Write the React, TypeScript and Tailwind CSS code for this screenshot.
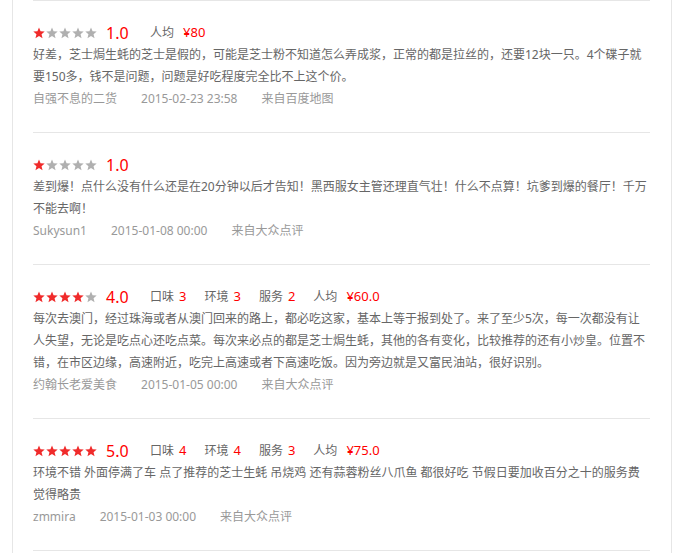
import React from "react";

type Review = {
  score: number;
  taste?: number;
  env?: number;
  service?: number;
  price?: string;
  lines: string;
  user: string;
  date: string;
  source: string;
};

const reviews: Review[] = [
  {
    score: 1,
    price: "¥80",
    lines:
      "好差，芝士焗生蚝的芝士是假的，可能是芝士粉不知道怎么弄成浆，正常的都是拉丝的，还要12块一只。4个碟子就要150多，钱不是问题，问题是好吃程度完全比不上这个价。",
    user: "自强不息的二货",
    date: "2015-02-23 23:58",
    source: "来自百度地图",
  },
  {
    score: 1,
    lines:
      "差到爆！点什么没有什么还是在20分钟以后才告知！黑西服女主管还理直气壮！什么不点算！坑爹到爆的餐厅！千万不能去啊！",
    user: "Sukysun1",
    date: "2015-01-08 00:00",
    source: "来自大众点评",
  },
  {
    score: 4,
    taste: 3,
    env: 3,
    service: 2,
    price: "¥60.0",
    lines:
      "每次去澳门，经过珠海或者从澳门回来的路上，都必吃这家，基本上等于报到处了。来了至少5次，每一次都没有让人失望，无论是吃点心还吃点菜。每次来必点的都是芝士焗生蚝，其他的各有变化，比较推荐的还有小炒皇。位置不错，在市区边缘，高速附近，吃完上高速或者下高速吃饭。因为旁边就是又富民油站，很好识别。",
    user: "约翰长老爱美食",
    date: "2015-01-05 00:00",
    source: "来自大众点评",
  },
  {
    score: 5,
    taste: 4,
    env: 4,
    service: 3,
    price: "¥75.0",
    lines:
      "环境不错 外面停满了车 点了推荐的芝士生蚝 吊烧鸡 还有蒜蓉粉丝八爪鱼 都很好吃 节假日要加收百分之十的服务费 觉得略贵",
    user: "zmmira",
    date: "2015-01-03 00:00",
    source: "来自大众点评",
  },
];

function Star({ on }: { on: boolean }) {
  return (
    <svg width="12" height="12" viewBox="0 0 12 12" className="block">
      <polygon
        points="6,0.4 7.55,4.2 11.7,4.5 8.55,7.15 9.55,11.3 6,9.05 2.45,11.3 3.45,7.15 0.3,4.5 4.45,4.2"
        fill={on ? "#f02b2b" : "#b0b0b0"}
      />
    </svg>
  );
}

function Label({ name, value, wide }: { name: string; value: string | number; wide?: boolean }) {
  return (
    <span className="flex items-center mr-[18px]">
      <span className="text-[#666] text-[12px]">{name}</span>
      <span className={`text-[#f00] text-[13px] ${wide ? "ml-[9px]" : "ml-[5px]"}`}>{value}</span>
    </span>
  );
}

function Item({ r }: { r: Review }) {
  return (
    <div className="border-t border-[#e6e6e6] pt-[21px] pb-[22px]">
      <div className="flex items-center h-[22px]">
        <div className="flex gap-[1px]">
          {[1, 2, 3, 4, 5].map((i) => (
            <Star key={i} on={i <= r.score} />
          ))}
        </div>
        <span className="ml-[9px] text-[16px] leading-[22px] text-[#f00] w-[22px]">
          {r.score.toFixed(1)}
        </span>
        <div className="flex items-center ml-[22px]">
          {r.taste !== undefined && <Label name="口味" value={r.taste} />}
          {r.env !== undefined && <Label name="环境" value={r.env} />}
          {r.service !== undefined && <Label name="服务" value={r.service} />}
          {r.price && <Label name="人均" value={r.price} wide />}
        </div>
      </div>
      <p className="text-[12px] leading-[22px] text-[#666]">{r.lines}</p>
      <div className="flex gap-[24px] text-[12px] leading-[22px] text-[#999]">
        <span>{r.user}</span>
        <span>{r.date}</span>
        <span>{r.source}</span>
      </div>
    </div>
  );
}

export default function App() {
  return (
    <div
      className="bg-white min-h-[553px]"
      style={{ fontFamily: '"Noto Sans", "Noto Sans CJK SC", sans-serif' }}
    >
      <div className="ml-[12px] w-[660px] min-h-[553px] border-l border-r border-[#e6e6e6] pl-[20px] pr-[21px]">
        {reviews.map((r, i) => (
          <Item key={i} r={r} />
        ))}
        <div className="border-t border-[#e6e6e6] h-[10px]" />
      </div>
    </div>
  );
}
